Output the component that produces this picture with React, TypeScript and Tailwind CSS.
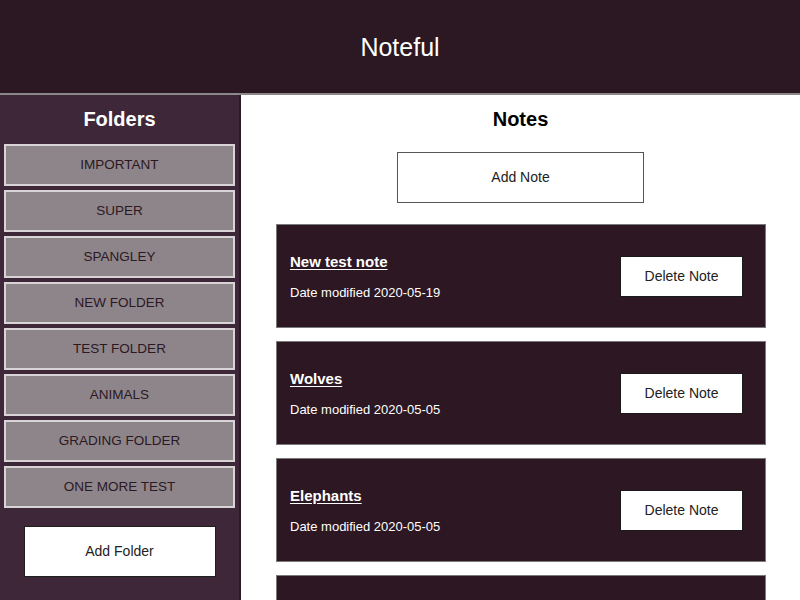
const folders = [
    'Important',
    'Super',
    'Spangley',
    'New Folder',
    'Test Folder',
    'Animals',
    'Grading Folder',
    'One more test',
];

const notes = [
    { name: 'New test note', modified: '2020-05-19' },
    { name: 'Wolves', modified: '2020-05-05' },
    { name: 'Elephants', modified: '2020-05-05' },
    { name: 'Lions', modified: '2020-05-05' },
];

function NoteCard({ name, modified }: { name: string; modified: string }) {
    return (
        <li className="flex h-[104px] shrink-0 flex-row items-center justify-between border border-[#7a7a7a] bg-[#2c1722] pl-[13px] pr-[22px]">
            <div className="flex flex-col gap-[14px] pt-[1px]">
                <a className="text-[15px] font-bold leading-[18px] text-white underline underline-offset-2">
                    {name}
                </a>
                <p className="text-[13px] leading-4 text-white">
                    Date modified {modified}
                </p>
            </div>
            <button
                className="h-[41px] w-[123px] shrink-0 border border-[#1a1a1a] bg-white text-[14px] text-[#222]"
                type="button"
            >
                Delete Note
            </button>
        </li>
    );
}

export default function App() {
    return (
        <div className="flex h-[600px] w-[800px] flex-col overflow-hidden font-['Liberation_Sans',Arial,sans-serif]">
            <header className="flex h-[95px] shrink-0 items-center justify-center border-b-[2px] border-[#8c8789] bg-[#2b1822] pt-[3px]">
                <h1 className="text-[25px] font-normal text-white">Noteful</h1>
            </header>
            <div className="flex min-h-0 flex-1 flex-row overflow-hidden">
                <nav className="flex w-[241px] shrink-0 flex-col border-r-[2px] border-[#2a1a26] bg-[#3d2739]">
                    <h2 className="mt-[12px] mb-[13px] shrink-0 text-center text-[20px] font-bold leading-6 text-white">
                        Folders
                    </h2>
                    <ul className="flex shrink-0 flex-col gap-[4px] px-[4px]">
                        {folders.map((folder) => (
                            <li
                                className="flex h-[42px] shrink-0 items-center justify-center border-[2px] border-[#d9d4d7] bg-[#8e858b] text-[13.5px] uppercase text-[#2b1822]"
                                key={folder}
                            >
                                {folder}
                            </li>
                        ))}
                    </ul>
                    <button
                        className="mx-auto mt-[18px] h-[51px] w-[192px] shrink-0 border border-[#1f1f1f] bg-white text-[14px] text-[#222]"
                        type="button"
                    >
                        Add Folder
                    </button>
                </nav>
                <main className="flex min-w-0 flex-1 flex-col items-center bg-white">
                    <h2 className="mt-[12px] shrink-0 text-center text-[20px] font-bold leading-6 text-black">
                        Notes
                    </h2>
                    <button
                        className="mt-[21px] h-[51px] w-[247px] shrink-0 border border-[#555] bg-white text-[14px] text-[#222]"
                        type="button"
                    >
                        Add Note
                    </button>
                    <ul className="mt-[21px] ml-[35px] flex w-[490px] shrink-0 flex-col gap-[13px] self-start">
                        {notes.map((note) => (
                            <NoteCard
                                key={note.name}
                                name={note.name}
                                modified={note.modified}
                            />
                        ))}
                    </ul>
                </main>
            </div>
        </div>
    );
}
